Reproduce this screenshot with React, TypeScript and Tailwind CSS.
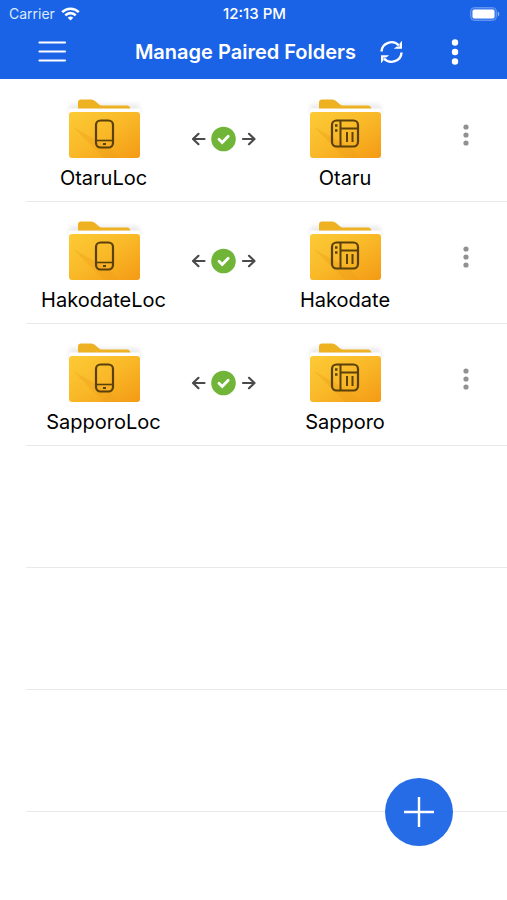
import { useId } from "react";

interface FolderPair {
  local: string;
  remote: string;
}

const pairs: FolderPair[] = [
  { local: "OtaruLoc", remote: "Otaru" },
  { local: "HakodateLoc", remote: "Hakodate" },
  { local: "SapporoLoc", remote: "Sapporo" },
];

const emptyRows = [0, 1, 2];

function StatusBar() {
  return (
    <div className="grid h-7 grid-cols-3 items-center pr-[7px] pl-[9px] text-sm">
      <div className="flex items-center gap-1.5 text-blue-100">
        <span>Carrier</span>
        <svg width="19" height="14" viewBox="0 0 19 14" fill="none" stroke="#fff" strokeWidth="2.6">
          <path d="M1.2 5.1a11.8 11.8 0 0 1 16.6 0" />
          <path d="M4.3 8.3a7.4 7.4 0 0 1 10.4 0" />
          <path d="M9.5 13.6 6.7 10.8a4 4 0 0 1 5.6 0z" fill="#fff" stroke="none" />
        </svg>
      </div>
      <span className="text-center text-[15px] font-medium whitespace-nowrap">12:13 PM</span>
      <svg className="justify-self-end" width="30" height="14" viewBox="0 0 30 14">
        <rect x="0.5" y="0.5" width="26" height="13" rx="4" fill="#3f7bec" stroke="#6394f0" />
        <rect x="2.5" y="2.5" width="22" height="9" rx="2" fill="#fff" />
        <path d="M27.800 4.500c2 .800 2 4.200 0 5z" fill="#8fb3f5" />
      </svg>
    </div>
  );
}

function Header() {
  return (
    <header className="h-[79px] bg-[#1a63e6] text-white">
      <StatusBar />
      <div className="flex h-12 items-center pr-12 pl-[38px]">
        <button type="button" aria-label="Menu">
          <svg width="29" height="22" viewBox="0 0 29 22" stroke="#fff" strokeWidth="2.2" strokeLinecap="round">
            <path d="M1.500 1.500h25.500M1.500 10.500h25.500M1.500 19.500h25.500" />
          </svg>
        </button>
        <h1 className="flex-1 pr-6 text-right text-xl font-semibold whitespace-nowrap">
          Manage Paired Folders
        </h1>
        <button type="button" aria-label="Refresh" className="mr-12">
          <svg width="23" height="24" viewBox="0 0 23 24" fill="none" stroke="#fff" strokeWidth="2.400">
            <path d="M1.500 11.500a10 9.700 0 0 1 17.500-6" />
            <path d="M21.500 12.500a10 9.700 0 0 1-17.500 6" />
            <path d="M22 .8v8h-8.200l3-2.400h2.800V3.600z" fill="#fff" stroke="none" />
            <path d="M1 23.200v-8h8.200l-3 2.400H3.400v2.800z" fill="#fff" stroke="none" />
          </svg>
        </button>
        <button type="button" aria-label="More options">
          <svg width="8" height="26" viewBox="0 0 8 26" fill="#fff">
            <circle cx="4" cy="3.500" r="3.200" />
            <circle cx="4" cy="13" r="3.200" />
            <circle cx="4" cy="22.500" r="3.200" />
          </svg>
        </button>
      </div>
    </header>
  );
}

function FolderIcon({ type }: { type: "phone" | "nas" }) {
  const id = useId();
  return (
    <svg className="overflow-visible" width="74" height="60" viewBox="0 0 74 60" fill="none">
      <defs>
        <linearGradient id={`${id}-body`} x1="0" y1="0" x2="1" y2="1">
          <stop offset="0" stopColor="#fccb35" />
          <stop offset="0.5" stopColor="#f9b828" />
          <stop offset="1" stopColor="#f49a14" />
        </linearGradient>
        <filter id={`${id}-halo`} x="-0.2" y="-0.4" width="1.4" height="1.8">
          <feGaussianBlur stdDeviation="2.5" />
        </filter>
      </defs>
      <rect x="2" y="5" width="71" height="12" rx="4" fill="#000" opacity="0.08" filter={`url(#${id}-halo)`} />
      <rect x="2" y="9.500" width="71" height="6" rx="2" fill="#fff" />
      <path d="M11 9.500V3.500Q11 .5 14 .5h10.500q2 0 3.500 1.500l3.500 3Q33 6.500 35 6.500h25q2.500 0 3.500 3z" fill="#edb122" />
      <rect x="2" y="13" width="71" height="46" rx="3" fill={`url(#${id}-body)`} />
      <path d="M6 28 37 59h15L43 49z" fill="#ee9f1b" opacity="0.4" />
      {type === "phone" ? (
        <g stroke="#5a410a" strokeWidth="2.200">
          <rect x="29" y="21.500" width="17" height="27" rx="4.500" />
          <path d="M29.500 41.500h16" strokeWidth="1.600" />
          <path d="M36 45h3" strokeWidth="2" />
        </g>
      ) : (
        <g stroke="#5a410a" strokeWidth="2.200">
          <rect x="24" y="21.500" width="26" height="26" rx="4.500" />
          <path d="M32.500 22v25M32.500 29.500h17" strokeWidth="2" />
          <path d="M39 33v10M44.500 33v10" strokeWidth="2" />
          <path d="M27 26.500h2.500M27 31.500h2.500" strokeWidth="2.500" />
        </g>
      )}
    </svg>
  );
}

function Folder({ name, type }: { name: string; type: "phone" | "nas" }) {
  return (
    <div className="flex min-w-0 flex-col items-center pt-[19px]">
      <FolderIcon type={type} />
      <span className="mt-[5px] text-xl whitespace-nowrap text-black">{name}</span>
    </div>
  );
}

function SyncStatus() {
  return (
    <svg
      className="mt-[46px] justify-self-center"
      width="66"
      height="26"
      viewBox="0 0 66 26"
      fill="none"
      role="img"
      aria-label="Synced"
    >
      <g stroke="#4a4a4c" strokeWidth="2.200" strokeLinecap="round" strokeLinejoin="round">
        <path d="M13.500 13H2.500M7.500 7.800 2 13l5.500 5.200" />
        <path d="M52 13h11M58 7.800 63.500 13 58 18.200" />
      </g>
      <circle cx="32.500" cy="13" r="12.300" fill="#70b538" />
      <path d="m28 13.200 3.200 3.200 6-6.200" stroke="#fff" strokeWidth="2.800" strokeLinecap="round" />
    </svg>
  );
}

function PairRow({ pair }: { pair: FolderPair }) {
  return (
    <li className="grid h-[122px] grid-cols-[155fr_85fr_158fr_83fr] items-start border-b border-[#e9e9eb]">
      <Folder name={pair.local} type="phone" />
      <SyncStatus />
      <Folder name={pair.remote} type="nas" />
      <button type="button" aria-label={`Options for ${pair.remote}`} className="mt-11 justify-self-center">
        <svg width="8" height="22" viewBox="0 0 8 22" fill="#919193">
          <circle cx="4" cy="3" r="2.600" />
          <circle cx="4" cy="11" r="2.600" />
          <circle cx="4" cy="19" r="2.600" />
        </svg>
      </button>
    </li>
  );
}

export default function App() {
  return (
    <div className="min-h-screen bg-white font-['Inter',sans-serif]">
      <Header />
      <main className="pt-px">
        <ul className="pl-[26px]">
          {pairs.map((pair) => (
            <PairRow key={pair.local} pair={pair} />
          ))}
          {emptyRows.map((row) => (
            <li key={row} aria-hidden="true" className="h-[122px] border-b border-[#e9e9eb]" />
          ))}
        </ul>
      </main>
      <button
        type="button"
        aria-label="Add paired folder"
        className="fixed right-[54px] bottom-[54px] flex size-[68px] items-center justify-center rounded-full bg-[#256ce6]"
      >
        <svg width="30" height="30" viewBox="0 0 30 30" stroke="#fff" strokeWidth="2.400">
          <path d="M15 0v30M0 15h30" />
        </svg>
      </button>
    </div>
  );
}
